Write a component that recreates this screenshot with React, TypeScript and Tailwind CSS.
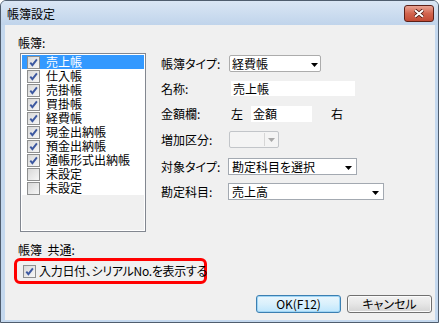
import React from 'react';

const books: [string, boolean][] = [
  ['売上帳', true],
  ['仕入帳', true],
  ['売掛帳', true],
  ['買掛帳', true],
  ['経費帳', true],
  ['現金出納帳', true],
  ['預金出納帳', true],
  ['通帳形式出納帳', true],
  ['未設定', false],
  ['未設定', false],
];

function Check({ checked }: { checked: boolean }) {
  return (
    <span className="flex h-[13px] w-[13px] shrink-0 items-center justify-center border border-[#8e8f8f] bg-gradient-to-br from-[#d8d8d8] to-[#f7f7f7]">
      {checked && (
        <svg width="11" height="11" viewBox="0 0 11 11">
          <path d="M2.3 5.6 L4.4 8.2 L8.9 2.4" fill="none" stroke="#3c58a0" strokeWidth="1.9" />
        </svg>
      )}
    </span>
  );
}

function Arrow({ disabled = false }: { disabled?: boolean }) {
  return (
    <svg width="7" height="4" viewBox="0 0 7 4" className="shrink-0">
      <path d="M0 0 H7 L3.5 4 Z" fill={disabled ? '#a8a8a8' : '#000'} />
    </svg>
  );
}

function Row({ label, children, className }: { label: string; children: React.ReactNode; className: string }) {
  return (
    <div className={`flex items-center ${className}`}>
      <span className="w-[68px] shrink-0 leading-[14px]">{label}</span>
      {children}
    </div>
  );
}

export default function App() {
  return (
    <div className="h-[323px] w-[439px] bg-white font-['Noto_Sans_CJK_JP','Noto_Sans',sans-serif] text-[12px] text-black [font-feature-settings:'palt']">
      <div className="flex h-[323px] w-[439px] flex-col rounded-t-[6px] border border-[#4f5d6e] bg-[#c4d8ee]">
        {/* Title bar */}
        <div className="flex h-[24px] shrink-0 justify-between rounded-t-[5px] bg-gradient-to-b from-[#dae6f4] to-[#c0d4eb] pr-[4px] pl-[6px]">
          <span className="mt-[6px] leading-[14px] text-[12px]">帳簿設定</span>
          <button className="mt-[4px] flex h-[17px] w-[30px] items-center justify-center rounded-[3px] border border-[#5c2018] bg-gradient-to-b from-[#e9a394] via-[#d2654f] to-[#c24a34]">
            <svg width="12" height="9" viewBox="0 0 12 9">
              <path d="M2 1.2 L10 7.8 M10 1.2 L2 7.8" stroke="#4d1a12" strokeWidth="3.6" />
              <path d="M2 1.2 L10 7.8 M10 1.2 L2 7.8" stroke="#fff" strokeWidth="2" />
            </svg>
          </button>
        </div>

        {/* Client area */}
        <div className="ml-[4px] mr-[3px] mb-[2px] flex h-[295px] w-[430px] flex-col bg-[#f0f0f0]">
          <span className="mt-[11px] ml-[13px] leading-[14px]">帳簿:</span>

          <div className="mt-[3px] flex">
            {/* Book list */}
            <div className="ml-[15px] flex h-[179px] w-[126px] flex-col border border-[#828790] bg-white p-[1px]">
              {books.map(([name, checked], i) => (
                <div
                  key={i}
                  className={`flex h-[14px] items-center pl-[5px] ${i === 0 ? 'bg-[#3399ff] text-white' : ''}`}
                >
                  <Check checked={checked} />
                  <span className="ml-[6px] whitespace-nowrap leading-[14px]">{name}</span>
                </div>
              ))}
              <div className="flex-1 bg-[#f0f0f0]" />
            </div>

            {/* Settings form */}
            <div className="ml-[15px] flex flex-col pt-[2px]">
              <Row label="帳簿タイプ:" className="h-[17px]">
                <div className="flex h-[17px] w-[92px] items-center justify-between rounded-[2px] border border-[#acacac] bg-white pr-[2px] pl-[2px]">
                  <span className="leading-[14px]">経費帳</span>
                  <span className="mt-[2px]"><Arrow /></span>
                </div>
              </Row>
              <Row label="名称:" className="mt-[9px] h-[15px]">
                <div className="ml-[2px] flex h-[15px] w-[124px] items-center bg-white pl-[2px]">
                  <span className="leading-[14px]">売上帳</span>
                </div>
              </Row>
              <Row label="金額欄:" className="mt-[10px] h-[16px]">
                <span className="ml-[2px] leading-[14px]">左</span>
                <div className="ml-[8px] flex h-[16px] w-[61px] items-center bg-white pl-[2px]">
                  <span className="leading-[14px]">金額</span>
                </div>
                <span className="ml-[19px] leading-[14px]">右</span>
              </Row>
              <Row label="増加区分:" className="mt-[9px] h-[17px]">
                <div className="flex h-[17px] w-[50px] items-center justify-end rounded-[2px] border border-[#c2c5c9] bg-[#f4f4f4]">
                  <span className="h-[13px] w-px bg-[#d6d6d6]" />
                  <span className="mx-[3px] mt-[1px]"><Arrow disabled /></span>
                </div>
              </Row>
              <Row label="対象タイプ:" className="mt-[10px] h-[17px]">
                <div className="-ml-[1px] flex h-[17px] w-[129px] items-center justify-between border border-[#a3a9b1] bg-white pr-[4px] pl-[3px]">
                  <span className="leading-[14px]">勘定科目を選択</span>
                  <span className="mt-[2px]"><Arrow /></span>
                </div>
              </Row>
              <Row label="勘定科目:" className="mt-[8px] h-[17px]">
                <div className="-ml-[1px] flex h-[17px] w-[156px] items-center justify-between border border-[#a3a9b1] bg-white pr-[4px] pl-[3px]">
                  <span className="leading-[14px]">売上高</span>
                  <span className="mt-[2px]"><Arrow /></span>
                </div>
              </Row>
            </div>
          </div>

          <span className="mt-[11px] ml-[13px] leading-[14px]">帳簿&nbsp;&nbsp;共通:</span>

          <div className="mt-[1px] ml-[9px] flex h-[26px] w-[193px] items-center rounded-[6px] border-[3px] border-[#ff0000] pl-[6px]">
            <Check checked />
            <span className="ml-[3px] whitespace-nowrap leading-[14px] tracking-[-0.3px]">入力日付、シリアルNo.を表示する</span>
          </div>

          <div className="mt-[11px] ml-[251px] flex gap-[6px]">
            <button className="flex h-[18px] w-[85px] items-center justify-center rounded-[3px] border border-[#3c7fb1] bg-gradient-to-b from-[#eaf6fd] via-[#d9f0fc] to-[#bee6fd] shadow-[inset_0_0_0_1px_#9fd5f5] leading-[14px]">
              OK(F12)
            </button>
            <button className="flex h-[18px] w-[85px] items-center justify-center rounded-[3px] border border-[#707070] bg-gradient-to-b from-[#f2f2f2] via-[#e6e6e6] to-[#d4d4d4] shadow-[inset_0_0_0_1px_#fbfbfb] leading-[14px]">
              キャンセル
            </button>
          </div>
        </div>
      </div>
    </div>
  );
}
